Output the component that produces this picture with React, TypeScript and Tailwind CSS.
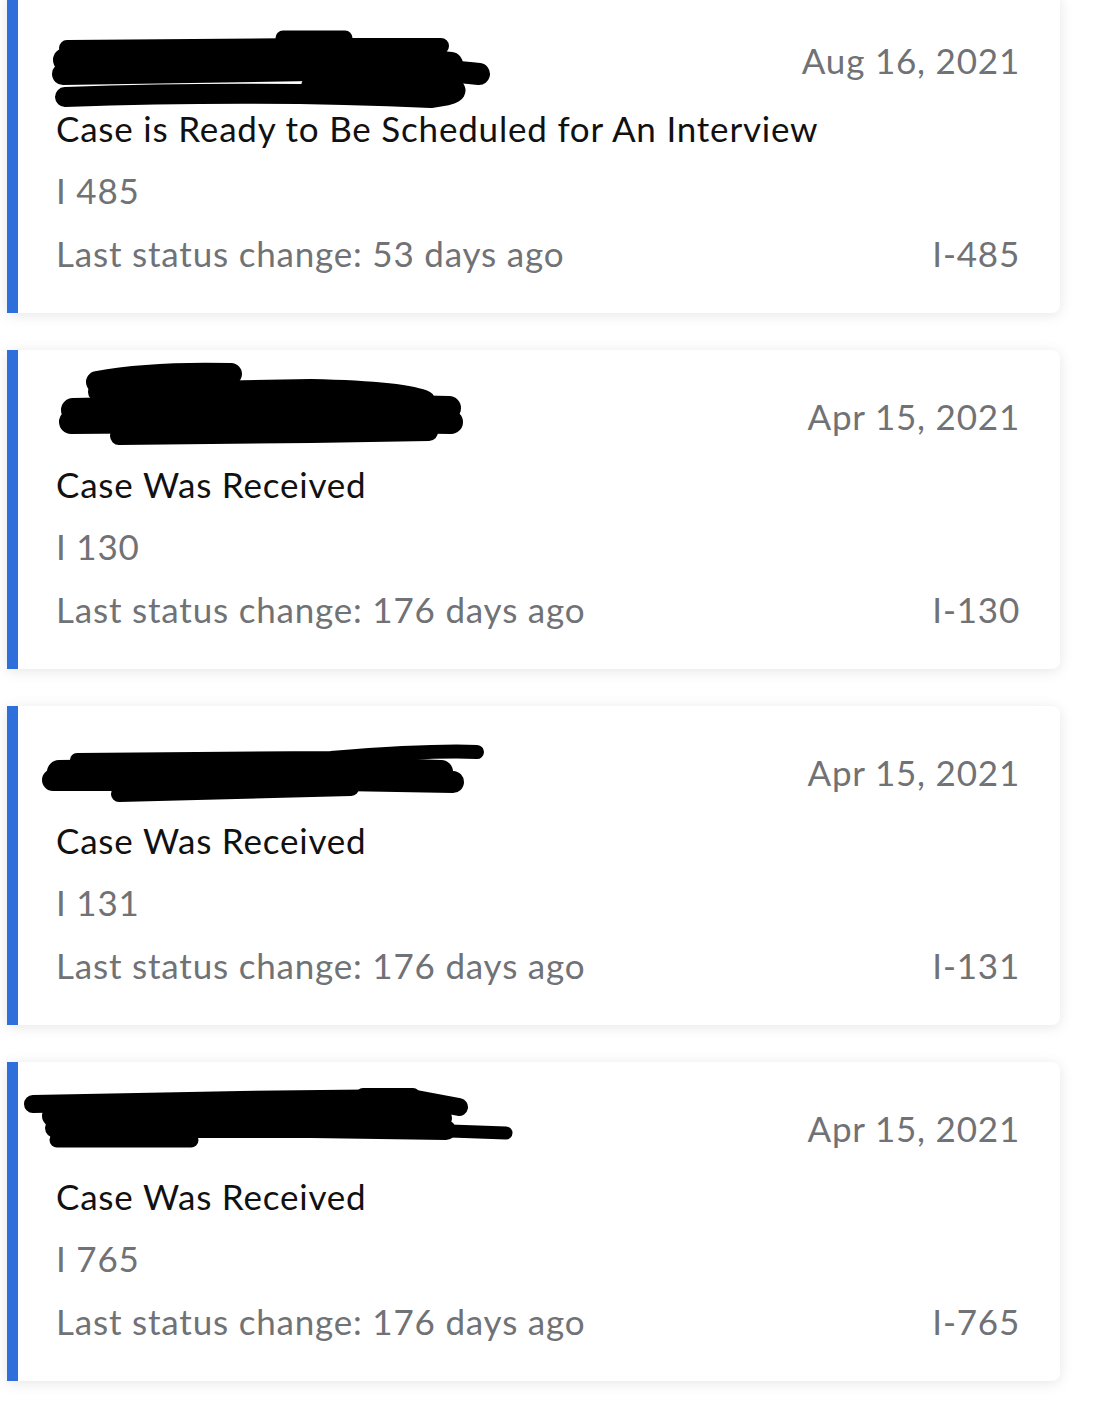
import React from 'react'

type Stroke = { d: string; w: number }

type CaseItem = {
  date: string
  status: string
  form: string
  code: string
  days: number
  scribble: Stroke[]
}

// scribbles: page x, card-relative y
const cases: CaseItem[] = [
  {
    date: 'Aug 16, 2021',
    status: 'Case is Ready to Be Scheduled for An Interview',
    form: 'I 485',
    code: 'I-485',
    days: 53,
    scribble: [
      { d: 'M272 44 L334 44', w: 15 },
      { d: 'M56 54 L300 52 L430 52', w: 16 },
      { d: 'M54 66 L380 64 L440 70', w: 24 },
      { d: 'M52 80 L300 76 Q420 74 468 80', w: 22 },
      { d: 'M54 103 Q250 96 420 104 Q455 100 440 92 L300 92', w: 20 },
    ],
  },
  {
    date: 'Apr 15, 2021',
    status: 'Case Was Received',
    form: 'I 130',
    code: 'I-130',
    days: 176,
    scribble: [
      { d: 'M86 32 Q140 22 220 24', w: 22 },
      { d: 'M86 42 L300 38 Q395 40 415 50', w: 18 },
      { d: 'M62 60 L300 55 L438 58', w: 24 },
      { d: 'M60 72 L300 70 L440 72', w: 24 },
      { d: 'M108 86 L300 84 L418 82', w: 18 },
    ],
  },
  {
    date: 'Apr 15, 2021',
    status: 'Case Was Received',
    form: 'I 131',
    code: 'I-131',
    days: 176,
    scribble: [
      { d: 'M66 54 L320 52 Q420 44 466 46', w: 14 },
      { d: 'M48 66 L330 62 L430 66', w: 24 },
      { d: 'M42 74 L330 74 L442 76', w: 22 },
      { d: 'M108 88 L340 82', w: 16 },
    ],
  },
  {
    date: 'Apr 15, 2021',
    status: 'Case Was Received',
    form: 'I 765',
    code: 'I-765',
    days: 176,
    scribble: [
      { d: 'M352 33 L402 33', w: 14 },
      { d: 'M22 42 L230 38 L400 36 L448 45', w: 18 },
      { d: 'M42 54 L300 52 L430 56', w: 22 },
      { d: 'M44 66 L300 66 L435 68', w: 20 },
      { d: 'M300 64 L495 71', w: 13 },
      { d: 'M46 78 L180 78', w: 15 },
    ],
  },
]

function Scribble({ strokes }: { strokes: Stroke[] }) {
  return (
    <svg
      className="absolute left-[-7px] top-0 pointer-events-none"
      width="520"
      height="130"
      viewBox="0 0 520 130"
    >
      {strokes.map((s, i) => (
        <path
          key={i}
          d={s.d}
          fill="none"
          stroke="#000"
          strokeWidth={s.w}
          strokeLinecap="round"
          strokeLinejoin="round"
        />
      ))}
    </svg>
  )
}

function CaseCard({ item }: { item: CaseItem }) {
  return (
    <div className="relative h-[319px] w-[1053px] bg-white border-l-[11px] border-[#2f6fdc] rounded-r-[8px] shadow-[0_2px_14px_rgba(0,0,0,0.10)] pl-[38px] pr-[40px] pt-[35px]">
      <div className="flex justify-end leading-[62px] text-[#707276]">{item.date}</div>
      <div className="mt-[6px] leading-[62px] text-[#111]">{item.status}</div>
      <div className="leading-[62px] text-[#707276]">{item.form}</div>
      <div className="mt-[1px] flex justify-between leading-[62px] text-[#707276]">
        <span>Last status change: {item.days} days ago</span>
        <span>{item.code}</span>
      </div>
      <Scribble strokes={item.scribble} />
    </div>
  )
}

export default function App() {
  return (
    <div className="h-[1403px] w-[1096px] overflow-hidden bg-white font-['Lato',sans-serif] text-[35px] tracking-[0.8px]">
      <div className="mt-[-6px] flex flex-col gap-[37px] pl-[7px]">
        {cases.map((c, i) => (
          <CaseCard key={i} item={c} />
        ))}
      </div>
    </div>
  )
}
